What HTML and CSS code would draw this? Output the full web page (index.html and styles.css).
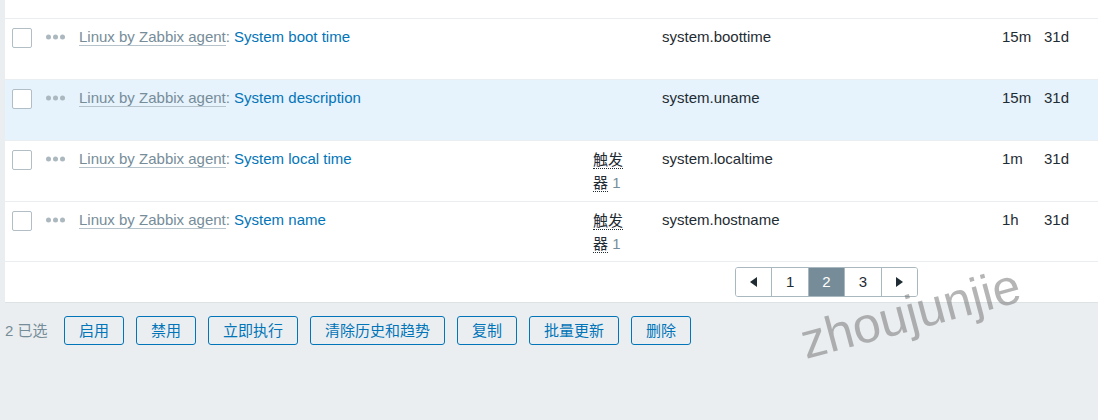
FILE: index.html
```html
<!DOCTYPE html>
<html lang="zh">
<head>
<meta charset="utf-8">
<link rel="stylesheet" href="styles.css">
</head>
<body>
<div class="panel">
  <div class="head"></div>
  <div class="row">
    <div class="cell"><span class="cb"></span></div>
    <div class="cell"><svg class="more" width="19" height="6" viewBox="0 0 19 6"><circle cx="2.5" cy="3" r="2.5"/><circle cx="9.5" cy="3" r="2.5"/><circle cx="16.5" cy="3" r="2.5"/></svg></div>
    <div class="cell"><span class="tpl">Linux by Zabbix agent</span><span class="sep">: </span><span class="link">System boot time</span></div>
    <div class="cell"></div>
    <div class="cell">system.boottime</div>
    <div class="cell">15m</div>
    <div class="cell">31d</div>
  </div>
  <div class="row hl">
    <div class="cell"><span class="cb"></span></div>
    <div class="cell"><svg class="more" width="19" height="6" viewBox="0 0 19 6"><circle cx="2.5" cy="3" r="2.5"/><circle cx="9.5" cy="3" r="2.5"/><circle cx="16.5" cy="3" r="2.5"/></svg></div>
    <div class="cell"><span class="tpl">Linux by Zabbix agent</span><span class="sep">: </span><span class="link">System description</span></div>
    <div class="cell"></div>
    <div class="cell">system.uname</div>
    <div class="cell">15m</div>
    <div class="cell">31d</div>
  </div>
  <div class="row">
    <div class="cell"><span class="cb"></span></div>
    <div class="cell"><svg class="more" width="19" height="6" viewBox="0 0 19 6"><circle cx="2.5" cy="3" r="2.5"/><circle cx="9.5" cy="3" r="2.5"/><circle cx="16.5" cy="3" r="2.5"/></svg></div>
    <div class="cell"><span class="tpl">Linux by Zabbix agent</span><span class="sep">: </span><span class="link">System local time</span></div>
    <div class="cell trig"><div class="trig-line"><span class="hint">触发</span></div><div class="trig-line"><span class="hint">器</span> <span class="cnt">1</span></div></div>
    <div class="cell">system.localtime</div>
    <div class="cell">1m</div>
    <div class="cell">31d</div>
  </div>
  <div class="row last">
    <div class="cell"><span class="cb"></span></div>
    <div class="cell"><svg class="more" width="19" height="6" viewBox="0 0 19 6"><circle cx="2.5" cy="3" r="2.5"/><circle cx="9.5" cy="3" r="2.5"/><circle cx="16.5" cy="3" r="2.5"/></svg></div>
    <div class="cell"><span class="tpl">Linux by Zabbix agent</span><span class="sep">: </span><span class="link">System name</span></div>
    <div class="cell trig"><div class="trig-line"><span class="hint">触发</span></div><div class="trig-line"><span class="hint">器</span> <span class="cnt">1</span></div></div>
    <div class="cell">system.hostname</div>
    <div class="cell">1h</div>
    <div class="cell">31d</div>
  </div>
  <div class="pager-row">
    <div class="pager">
      <span class="pg"><svg width="8" height="10" viewBox="0 0 8 10"><path d="M7 0 L7 10 L0 5 Z"/></svg></span>
      <span class="pg">1</span>
      <span class="pg active">2</span>
      <span class="pg">3</span>
      <span class="pg"><svg width="8" height="10" viewBox="0 0 8 10"><path d="M1 0 L1 10 L8 5 Z"/></svg></span>
    </div>
  </div>
</div>
<div class="actions">
  <span class="selected">2 已选</span>
  <button class="btn">启用</button>
  <button class="btn">禁用</button>
  <button class="btn">立即执行</button>
  <button class="btn">清除历史和趋势</button>
  <button class="btn">复制</button>
  <button class="btn">批量更新</button>
  <button class="btn">删除</button>
</div>
<div class="watermark">zhoujunjie</div>
</body>
</html>
```
FILE: styles.css
```css
html, body {
  margin: 0;
  padding: 0;
}
body {
  background: #ebeef0;
  font-family: "Liberation Sans", Arial, "Noto Sans CJK SC", sans-serif;
  font-size: 15px;
  line-height: 18px;
  color: #1f2c33;
  height: 420px;
  overflow: hidden;
  position: relative;
}
.panel {
  margin-left: 5px;
  background: #ffffff;
  border-bottom: 1px solid #dde2e5;
}
.head {
  height: 18px;
}
.row {
  display: grid;
  grid-template-columns: 34px 33px 514px 69px 340px 42px 1fr;
  padding-left: 2px;
  height: 61px;
  box-sizing: border-box;
  border-top: 1px solid #ebeef0;
}
.row.last {
  height: 60px;
}
.row.hl {
  background: #e6f2fc;
}
.cell {
  padding: 9px 5px 0;
  white-space: nowrap;
}
.cb {
  display: block;
  width: 20px;
  height: 20px;
  box-sizing: border-box;
  border: 1px solid #b1bec5;
  border-radius: 2px;
  background: #fff;
}
.more {
  display: block;
  fill: #abb8bf;
  margin-top: 6px;
}
.tpl {
  color: #768d99;
  border-bottom: 1px solid #b6c3ca;
}
.sep {
  color: #768d99;
  white-space: pre;
}
.link {
  color: #0275b8;
}
.trig {
  padding-top: 7px;
}
.trig-line {
  line-height: 23px;
  height: 23px;
}
.hint {
  border-bottom: 1px dotted #1f2c33;
}
.cnt {
  color: #768d99;
}
.pager-row {
  border-top: 1px solid #ebeef0;
  display: flex;
  justify-content: flex-end;
  padding: 5px 180px 5px 0;
}
.pager {
  display: flex;
  border: 1px solid #a9b7bf;
  border-radius: 3px;
  overflow: hidden;
}
.pg {
  width: 35.4px;
  height: 28px;
  display: flex;
  align-items: center;
  justify-content: center;
  border-left: 1px solid #a9b7bf;
  color: #1f2c33;
  background: #fff;
}
.pg:first-child {
  border-left: none;
}
.pg svg {
  fill: #1f2c33;
}
.pg.active {
  background: #768d99;
  color: #fff;
}
.actions {
  display: flex;
  align-items: center;
  gap: 12px;
  padding-left: 5px;
  margin-top: 13px;
}
.selected {
  color: #768d99;
  white-space: nowrap;
  flex: none;
  width: 47px;
}
.btn {
  font-family: "Liberation Sans", Arial, "Noto Sans CJK SC", sans-serif;
  font-size: 15px;
  line-height: 18px;
  height: 29px;
  padding: 0 14px;
  border: 1px solid #0275b8;
  border-radius: 3px;
  background: transparent;
  color: #0275b8;
  margin: 0;
  white-space: nowrap;
}
.watermark {
  position: absolute;
  left: 806px;
  top: 317px;
  font-size: 50px;
  line-height: 50px;
  color: rgba(120, 120, 120, 0.55);
  transform-origin: 0 42px;
  transform: rotate(-15deg);
  white-space: nowrap;
  pointer-events: none;
}
```
